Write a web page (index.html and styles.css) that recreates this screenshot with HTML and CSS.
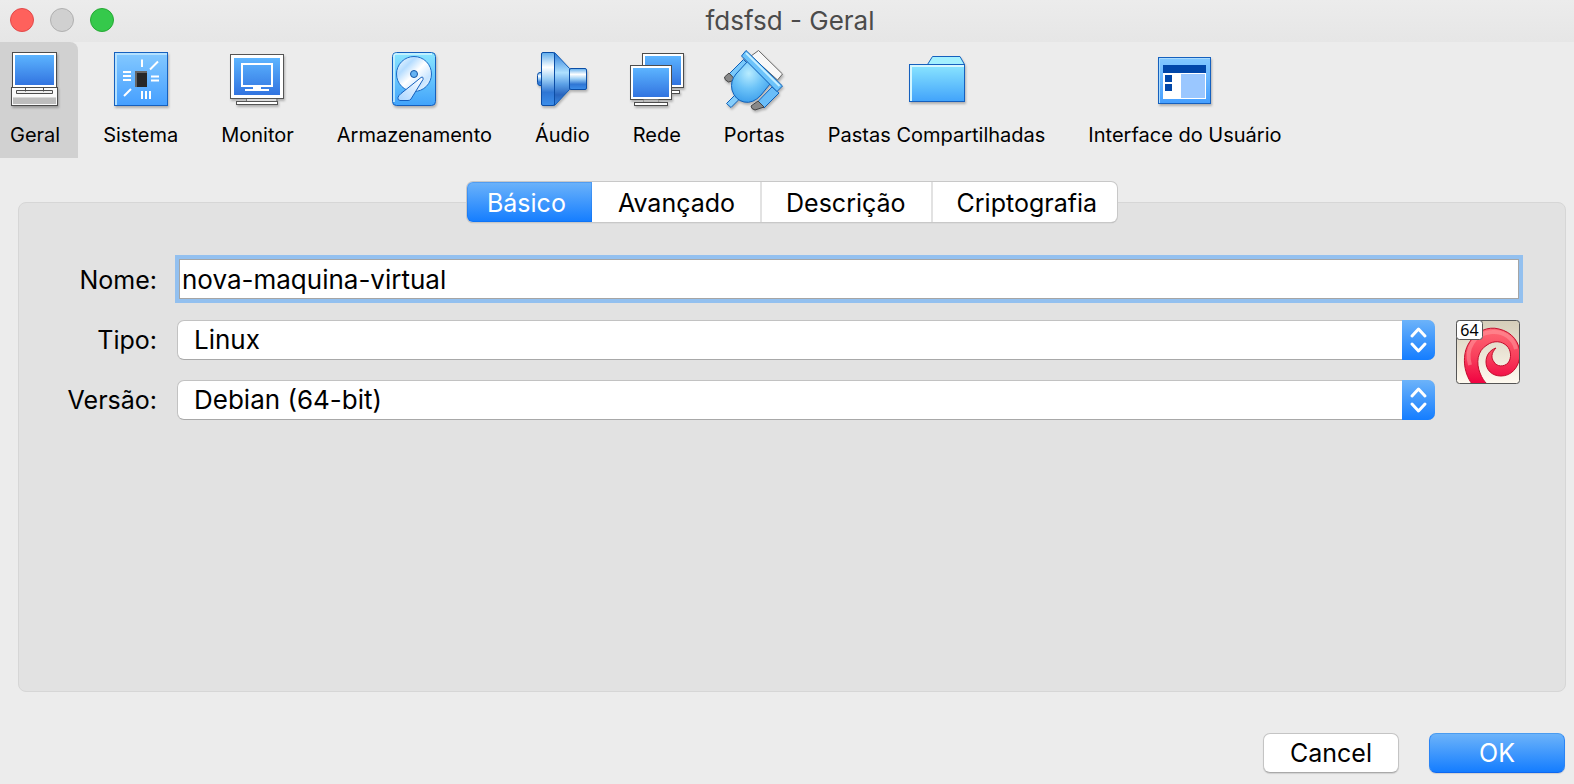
FILE: index.html
```html
<!DOCTYPE html>
<html lang="pt-BR">
<head>
<meta charset="utf-8">
<title>fdsfsd - Geral</title>
<link rel="stylesheet" href="styles.css">
</head>
<body>
<svg class="defs" width="0" height="0" aria-hidden="true">
  <defs>
    <linearGradient id="screen" x1="0" y1="0" x2="0" y2="1"><stop offset="0" stop-color="#5cb4ff"/><stop offset="1" stop-color="#3274e0"/></linearGradient>
    <linearGradient id="sky" x1="0" y1="0" x2="0" y2="1"><stop offset="0" stop-color="#84c9ff"/><stop offset="1" stop-color="#459fff"/></linearGradient>
    <linearGradient id="aqua" x1="0" y1="0" x2="0" y2="1"><stop offset="0" stop-color="#8be6ff"/><stop offset="1" stop-color="#41a3fb"/></linearGradient>
    <linearGradient id="metal" x1="0" y1="0" x2="0" y2="1"><stop offset="0" stop-color="#5cabec"/><stop offset=".28" stop-color="#fff"/><stop offset=".5" stop-color="#9bcef5"/><stop offset=".75" stop-color="#2f76d4"/><stop offset="1" stop-color="#3c8eea"/></linearGradient>
    <linearGradient id="cone" x1="0" y1="0" x2="0" y2="1"><stop offset="0" stop-color="#2b7bd8"/><stop offset=".38" stop-color="#aee0ff"/><stop offset=".6" stop-color="#5a9fe6"/><stop offset=".8" stop-color="#2864bd"/><stop offset="1" stop-color="#3b8ae4"/></linearGradient>
    <linearGradient id="disc" x1="0" y1="0" x2="1" y2="1"><stop offset="0" stop-color="#fff"/><stop offset=".28" stop-color="#b4dcff"/><stop offset=".5" stop-color="#fff"/><stop offset=".75" stop-color="#c8e5ff"/><stop offset="1" stop-color="#fff"/></linearGradient>
    <linearGradient id="arm" x1="1" y1="0" x2="0" y2="1"><stop offset="0" stop-color="#fff"/><stop offset="1" stop-color="#a8d4ff"/></linearGradient>
    <radialGradient id="plug" cx=".45" cy=".3" r=".75"><stop offset="0" stop-color="#b8ecff"/><stop offset=".5" stop-color="#6cc3f8"/><stop offset="1" stop-color="#389bea"/></radialGradient>
    <linearGradient id="sand" x1="0" y1="0" x2="0" y2="1"><stop offset="0" stop-color="#d5cdb9"/><stop offset="1" stop-color="#fffaf0"/></linearGradient>
    <linearGradient id="swirl" x1="0" y1="0" x2="0" y2="1"><stop offset="0" stop-color="#ff6a75"/><stop offset=".5" stop-color="#f8405c"/><stop offset="1" stop-color="#f00040"/></linearGradient>
  </defs>
</svg>
<div class="window">
  <header class="titlebar">
    <div class="lights">
      <button class="light close" aria-label="Fechar"></button>
      <button class="light minimize" aria-label="Minimizar" disabled></button>
      <button class="light zoom" aria-label="Ampliar"></button>
    </div>
    <h1 class="title">fdsfsd - Geral</h1>
  </header>

  <nav class="toolbar">
    <button class="tool active">
      <svg class="icon" viewBox="0 0 64 64">
        <rect x="9.500" y="4.500" width="44" height="35" fill="#fff" stroke="#4c4c4c"/>
        <rect x="12" y="7" width="39" height="30" fill="url(#screen)"/>
        <rect x="8.500" y="39.500" width="46" height="18" fill="#fafafa" stroke="#4c4c4c"/>
        <path d="M10 50h43v6H10z" fill="#bdbdbd"/>
        <path d="M10 49.500h43" stroke="#d8d8d8"/>
        <path d="M22.500 40v3.500M40.500 40v3.500M13.500 42.500h36v3h-36z" fill="#eee" stroke="#4c4c4c"/>
      </svg>
      <span>Geral</span>
    </button>
    <button class="tool">
      <svg class="icon" viewBox="0 0 64 64">
        <rect x="5.500" y="4.500" width="53" height="53" fill="url(#sky)" stroke="#1560be"/>
        <path d="M7 57V6h51" fill="none" stroke="#b4e1ff" stroke-width="2"/>
        <rect x="26" y="23" width="12" height="16" fill="#272727"/>
        <path d="M27 39V24h11" fill="none" stroke="#666" stroke-width="2"/>
        <path d="M33 11.500v7.500M41 21.500l8-8M14 24h8M14 28h8M14 32h8M42 28.500h8M42 32.500h8M15 48l7-7M33 43v8M37 43v8M41 43v8" stroke="#fff" stroke-width="2"/>
      </svg>
      <span>Sistema</span>
    </button>
    <button class="tool">
      <svg class="icon" viewBox="0 0 64 64">
        <rect x="5.500" y="6.500" width="53" height="44" fill="#fff" stroke="#555"/>
        <rect x="9" y="10" width="46" height="37" fill="url(#screen)"/>
        <path d="M17 16h30v22H17z" fill="none" stroke="#fff" stroke-width="2"/>
        <path d="M28 39h8v2h8v2H20v-2h8z" fill="#fff"/>
        <path d="M21.500 51v3M52 51v3" stroke="#777"/><path d="M22 51h29v3H22z" fill="#ddd"/>
        <rect x="11.500" y="53.500" width="41" height="3" fill="#fff" stroke="#555"/>
      </svg>
      <span>Monitor</span>
    </button>
    <button class="tool">
      <svg class="icon" viewBox="0 0 64 64">
        <rect x="10.500" y="4.500" width="43" height="53" rx="4" fill="url(#aqua)" stroke="#1560be"/>
        <path d="M12 54V8q0-2 2-2h36" fill="none" stroke="#d4f5ff" stroke-width="1.500"/>
        <circle cx="32" cy="26" r="17.500" fill="url(#disc)" stroke="#1b6cc6"/>
        <circle cx="32" cy="26" r="3.500" fill="#66b3f3" stroke="#1455a5"/>
        <path d="M39 29.500q2.500-1.500 2 2L29 51q-1 1.500-3 1.500h-8q-3-.5-2-3 .5-2 3-4z" fill="url(#arm)" stroke="#1560be"/>
      </svg>
      <span>Armazenamento</span>
    </button>
    <button class="tool">
      <svg class="icon" viewBox="0 0 64 64">
        <path d="M11.500 24.500H10q-2.500 0-2.500 3v7q0 3 2.500 3h1.500z" fill="url(#metal)" stroke="#0b4da5"/>
        <path d="M24.500 4.500 39.500 20.500v21L24.500 57.500z" fill="url(#cone)" stroke="#0b59b8"/>
        <rect x="39.500" y="20.500" width="17" height="21" rx="1.500" fill="url(#metal)" stroke="#0b4da5"/>
        <rect x="11.500" y="4.500" width="13" height="53" rx="1.500" fill="url(#metal)" stroke="#0b4da5"/>
      </svg>
      <span>Áudio</span>
    </button>
    <button class="tool">
      <svg class="icon" viewBox="0 0 64 64">
        <rect x="17.500" y="5.500" width="41" height="34" fill="#fff" stroke="#4c4c4c"/>
        <rect x="20" y="8" width="36" height="29" fill="url(#screen)"/>
        <rect x="40.500" y="42.500" width="14" height="3" fill="#fff" stroke="#4c4c4c"/>
        <rect x="5.500" y="17.500" width="41" height="34" fill="#fff" stroke="#4c4c4c"/>
        <rect x="8" y="20" width="36" height="29" fill="url(#screen)"/>
        <path d="M18.500 52h15v2h-15z" fill="#ddd" stroke="#999"/>
        <rect x="9.500" y="54.500" width="33" height="3" fill="#fff" stroke="#4c4c4c"/>
      </svg>
      <span>Rede</span>
    </button>
    <button class="tool">
      <svg class="icon" viewBox="0 0 64 64">
        <path d="M36.500 2.500 60.500 26l-5 6L29 8z" fill="#f8f8f8" stroke="#666" stroke-linejoin="round"/>
        <path d="M14 46 4.500 55.500l4.500 4 11-11z" fill="#85cdfa" stroke="#0e5fb8"/>
        <path d="M21.500 11.500 7 26l7 7 14-15z" fill="#79c8fa" stroke="#0e5fb8"/>
        <path d="M7 25 2.500 29q-.5 3 4 5l7-2z" fill="#888" stroke="#444"/>
        <path d="M50 39 36 53.500l6 6.500L57 45z" fill="#6abdf8" stroke="#0e5fb8"/>
        <path d="M36 53 29 58q0 3 4 4l9-3z" fill="#888" stroke="#444"/>
        <path d="M26 13 48 36 39 47q-8 9-17 7T10 42q-2-9 4-16z" fill="url(#plug)" stroke="#0e5fb8"/>
        <path d="M24 2.500 60.500 38l-5.500 5.500L19.500 8z" fill="#6cc3fa" stroke="#0e5fb8" stroke-linejoin="round"/>
        <path d="m24 5 33.500 33" stroke="#c6efff" stroke-width="2"/>
      </svg>
      <span>Portas</span>
    </button>
    <button class="tool">
      <svg class="icon" viewBox="0 0 64 64">
        <path d="m22.500 16.500 5-8H55l4.500 8z" fill="#a3f0ff" stroke="#1560be"/>
        <rect x="4.500" y="16.500" width="55" height="37" fill="url(#aqua)" stroke="#1560be"/>
        <path d="M6 53V18h53" fill="none" stroke="#d4f6ff" stroke-width="2"/>
      </svg>
      <span>Pastas Compartilhadas</span>
    </button>
    <button class="tool">
      <svg class="icon" viewBox="0 0 64 64">
        <rect x="5.500" y="9.500" width="52" height="46" fill="url(#sky)" stroke="#1560be"/>
        <path d="M6.500 55V10.500H57" fill="none" stroke="#a9dbff"/>
        <path d="M10 17h43v34H10z" fill="#fff"/>
        <path d="M10 17h43v8H10zM12 27h7v7h-7zM12 36h7v7h-7z" fill="#0147a9"/>
        <path d="M28 26h24v24H28z" fill="#9ac7ff"/>
      </svg>
      <span>Interface do Usuário</span>
    </button>
  </nav>

  <main class="content">
    <div class="tabs" role="tablist">
      <button class="tab selected" role="tab" aria-selected="true">Básico</button>
      <button class="tab" role="tab">Avançado</button>
      <button class="tab" role="tab">Descrição</button>
      <button class="tab" role="tab">Criptografia</button>
    </div>
    <form class="panel" id="settings">
      <label for="name">Nome:</label>
      <input class="field" id="name" type="text" value="nova-maquina-virtual">

      <label for="type">Tipo:</label>
      <div class="picker">
        <select id="type"><option>Linux</option></select>
        <svg class="arrows" viewBox="0 0 33 40"><path d="m10 16 6.500-7 6.500 7M10 24l6.500 7 6.500-7"/></svg>
      </div>
      <svg class="os" viewBox="0 0 64 64" role="img" aria-label="Debian 64">
        <clipPath id="frame"><rect x="1" y="1" width="62" height="62" rx="2"/></clipPath>
        <rect x=".5" y=".5" width="63" height="63" rx="3" fill="url(#sand)"/>
        <g clip-path="url(#frame)">
          <path d="M16 64C7 52 6 34 13 23 20 11 32 6 43 9c13 3 21 13 21 26-1 13-9 21-19 21-9 0-15-6-15-14 0-7 4-12 10-14-5 5-5 10-2 14 3 5 10 5 14 1 4-5 3-13-1-17-5-5-13-6-20-1-10 6-11 18-7 28 2 5 4 8 7 11z" fill="url(#swirl)" stroke="#c20d2c"/>
          <path d="M14 45C9 29 18 13 36 12c12-1 22 7 24 17" fill="none" stroke="#ff9ca2" stroke-width="4" opacity=".5"/>
        </g>
        <rect x=".5" y=".5" width="63" height="63" rx="3" fill="none" stroke="#555"/>
        <rect x=".5" y=".5" width="26" height="19" rx="3" fill="#fff" stroke="#555"/>
        <text x="13.500" y="16" text-anchor="middle" class="bits">64</text>
      </svg>

      <label for="version">Versão:</label>
      <div class="picker">
        <select id="version"><option>Debian (64-bit)</option></select>
        <svg class="arrows" viewBox="0 0 33 40"><path d="m10 16 6.500-7 6.500 7M10 24l6.500 7 6.500-7"/></svg>
      </div>
    </form>
  </main>

  <footer class="actions">
    <button class="button">Cancel</button>
    <button class="button primary" form="settings" type="button">OK</button>
  </footer>
</div>
</body>
</html>
```
FILE: styles.css
```css
* { box-sizing: border-box; }
body {
  margin: 0;
  background: #ececec;
  color: #000;
  font: 25px/30px Inter, "Liberation Sans", sans-serif;
}
button, input, select { font: inherit; color: inherit; }
button { border: 0; padding: 0; background: none; }
.defs { position: absolute; }
.window { display: flex; flex-direction: column; min-height: 100vh; }

.titlebar {
  display: grid;
  grid-template-columns: 1fr auto 1fr;
  align-items: center;
  height: 42px;
  padding: 0 4px 0 10px;
  background: linear-gradient(#ececec, #e6e6e6);
}
.lights { display: flex; gap: 16px; padding-bottom: 2px; }
.light { width: 24px; height: 24px; border: 1px solid; border-radius: 50%; }
.close { background: #ff615c; border-color: #e2494a; }
.minimize { background: #d0d0d0; border-color: #b0b0b0; }
.zoom { background: #35c94b; border-color: #26a934; }
.title { margin: 0; font-size: 26px; font-weight: 400; color: #4b4b4b; }

.toolbar { display: flex; gap: 7px; }
.tool {
  display: flex;
  flex-direction: column;
  align-items: center;
  height: 116px;
  padding: 6px 18px 0;
  font-size: 20px;
  line-height: 28px;
  white-space: nowrap;
}
.tool:first-child { padding-left: 10px; }
.tool.active { background: #d1d1d1; border-top-right-radius: 8px; }
.icon {
  width: 64px;
  height: 64px;
  margin: 0 -10px 9px;
  filter: drop-shadow(1px 2px 1px rgba(0, 0, 0, .25));
}

.content { flex: 1; display: flex; flex-direction: column; padding: 24px 8px 0 18px; }
.tabs {
  display: flex;
  align-self: center;
  height: 40px;
  margin-bottom: -20px;
  border-radius: 6px;
  background: #fff;
  box-shadow: 0 0 0 1px #c8c8c8, 0 1px 1px #999;
  z-index: 1;
}
.tab { padding: 2px 25px 0 24px; border-left: 2px solid #e2e2e2; }
.tab:last-child { padding-right: 20px; }
.tab.selected {
  padding: 2px 26px 0 20px;
  border: 0;
  border-radius: 6px 0 0 6px;
  background: linear-gradient(#6cb3fa, #147dff);
  box-shadow: inset 0 0 0 1px rgba(0, 90, 220, .25);
  color: #fff;
}
.tab.selected + .tab { border-color: transparent; }
.panel {
  flex: 1;
  display: grid;
  grid-template-columns: 118px 1fr 64px;
  grid-template-rows: 41px 40px 40px;
  gap: 20px;
  padding: 56px 45px 0 20px;
  border: 1px solid #d6d6d6;
  border-radius: 8px;
  background: #e2e2e2;
}
.panel label { text-align: right; align-self: center; }
.field {
  grid-column: 2 / 4;
  margin: 0 1px 1px 2px;
  padding: 2px 2px 0;
  border: 1px solid #a5a5a5;
  outline: 4px solid #93c0ef;
  background: #fff;
  font-size: 26px;
}
.picker { position: relative; display: grid; margin-right: 1px; }
.picker select {
  appearance: none;
  min-width: 0;
  padding: 0 50px 0 16px;
  border: 1px solid #c2c2c2;
  border-bottom-color: #a8a8a8;
  border-radius: 7px;
  background: #fff;
  font-size: 26px;
}
.arrows {
  position: absolute;
  top: 0;
  right: 0;
  width: 33px;
  height: 100%;
  border-radius: 0 7px 7px 0;
  background: linear-gradient(#6cb3fa, #147dff);
  fill: none;
  stroke: #fff;
  stroke-width: 3px;
  stroke-linecap: round;
  stroke-linejoin: round;
  pointer-events: none;
}
.os { width: 64px; height: 64px; }
.bits { font-size: 16px; font-family: "Noto Sans", sans-serif; }

.actions { display: flex; justify-content: flex-end; gap: 30px; padding: 41px 9px 11px; }
.button {
  width: 136px;
  height: 40px;
  border: 1px solid #c4c4c4;
  border-bottom-color: #a9a9a9;
  border-radius: 7px;
  background: #fff;
  box-shadow: 0 1px 1px rgba(0, 0, 0, .12);
}
.button.primary {
  border-color: #4a9cf0 #2a84f5 #0e68f0;
  background: linear-gradient(#6cb3fa, #147dff);
  color: #fff;
}
```
